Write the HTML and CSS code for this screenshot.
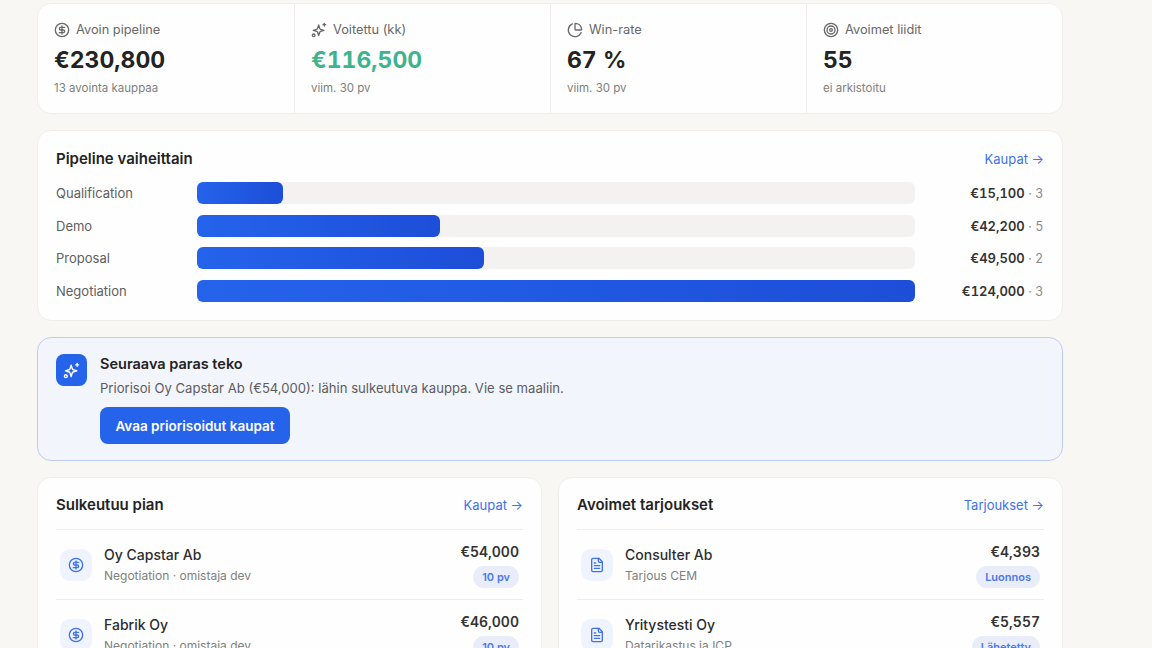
FILE: index.html
```html
<!DOCTYPE html>
<html lang="fi">
<head>
    <meta charset="UTF-8">
    <meta name="viewport" content="width=device-width, initial-scale=1.0">
    <title>Yhteenveto</title>
    <link rel="stylesheet" href="styles.css">
</head>
<body>
    <svg class="icon-defs" aria-hidden="true">
        <symbol id="i-dollar" viewBox="0 0 24 24"><circle cx="12" cy="12" r="10"/><path d="M16 8h-6a2 2 0 1 0 0 4h4a2 2 0 1 1 0 4H8"/><path d="M12 18V6"/></symbol>
        <symbol id="i-sparkles" viewBox="0 0 24 24"><path d="M11.5 20.5 9.9 15.4a2 2 0 0 0-1.3-1.3L3.5 12.500l5.100-1.600a2 2 0 0 0 1.300-1.300l1.600-5.100 1.600 5.100a2 2 0 0 0 1.300 1.300l5.100 1.600-5.100 1.600a2 2 0 0 0-1.300 1.300z"/><path d="M20 2v4"/><path d="M22 4h-4"/><circle cx="4" cy="20" r="2"/></symbol>
        <symbol id="i-pie" viewBox="0 0 24 24"><path d="M21 12c.552 0 1.005-.449.95-.998a10 10 0 0 0-8.953-8.951c-.55-.055-.998.398-.998.95v8a1 1 0 0 0 1 1z"/><path d="M21.21 15.89A10 10 0 1 1 8 2.83"/></symbol>
        <symbol id="i-target" viewBox="0 0 24 24"><circle cx="12" cy="12" r="10"/><circle cx="12" cy="12" r="6"/><circle cx="12" cy="12" r="2"/></symbol>
        <symbol id="i-file" viewBox="0 0 24 24"><path d="M15 2H6a2 2 0 0 0-2 2v16a2 2 0 0 0 2 2h12a2 2 0 0 0 2-2V7z"/><path d="M14 2v4a2 2 0 0 0 2 2h4"/><path d="M10 9H8"/><path d="M16 13H8"/><path d="M16 17H8"/></symbol>
    </svg>

    <div class="page">
        <section class="card stats">
            <div class="stat">
                <div class="stat-label"><svg class="icon"><use href="#i-dollar"/></svg>Avoin pipeline</div>
                <div class="stat-value">€230,800</div>
                <div class="stat-sub">13 avointa kauppaa</div>
            </div>
            <div class="stat">
                <div class="stat-label"><svg class="icon"><use href="#i-sparkles"/></svg>Voitettu (kk)</div>
                <div class="stat-value green">€116,500</div>
                <div class="stat-sub">viim. 30 pv</div>
            </div>
            <div class="stat">
                <div class="stat-label"><svg class="icon"><use href="#i-pie"/></svg>Win-rate</div>
                <div class="stat-value">67 %</div>
                <div class="stat-sub">viim. 30 pv</div>
            </div>
            <div class="stat">
                <div class="stat-label"><svg class="icon"><use href="#i-target"/></svg>Avoimet liidit</div>
                <div class="stat-value">55</div>
                <div class="stat-sub">ei arkistoitu</div>
            </div>
        </section>

        <section class="card pipeline">
            <div class="card-head">
                <h2>Pipeline vaiheittain</h2>
                <a class="more" href="#">Kaupat →</a>
            </div>
            <div class="stage">
                <span class="stage-name">Qualification</span>
                <div class="track"><div class="fill" style="width: 12%"></div></div>
                <span class="stage-sum"><b>€15,100</b> · 3</span>
            </div>
            <div class="stage">
                <span class="stage-name">Demo</span>
                <div class="track"><div class="fill" style="width: 33.900%"></div></div>
                <span class="stage-sum"><b>€42,200</b> · 5</span>
            </div>
            <div class="stage">
                <span class="stage-name">Proposal</span>
                <div class="track"><div class="fill" style="width: 40%"></div></div>
                <span class="stage-sum"><b>€49,500</b> · 2</span>
            </div>
            <div class="stage">
                <span class="stage-name">Negotiation</span>
                <div class="track"><div class="fill" style="width: 100%"></div></div>
                <span class="stage-sum"><b>€124,000</b> · 3</span>
            </div>
        </section>

        <section class="card next">
            <div class="next-icon"><svg class="icon"><use href="#i-sparkles"/></svg></div>
            <div class="next-body">
                <h3>Seuraava paras teko</h3>
                <p>Priorisoi Oy Capstar Ab (€54,000): lähin sulkeutuva kauppa. Vie se maaliin.</p>
                <button>Avaa priorisoidut kaupat</button>
            </div>
        </section>

        <div class="columns">
            <section class="card list">
                <div class="card-head list-head">
                    <h2>Sulkeutuu pian</h2>
                    <a class="more" href="#">Kaupat →</a>
                </div>
                <div class="row">
                    <div class="row-icon"><svg class="icon"><use href="#i-dollar"/></svg></div>
                    <div class="row-main">
                        <div class="row-name">Oy Capstar Ab</div>
                        <div class="row-sub">Negotiation · omistaja dev</div>
                    </div>
                    <div class="row-side">
                        <div class="row-amount">€54,000</div>
                        <span class="badge">10 pv</span>
                    </div>
                </div>
                <div class="row">
                    <div class="row-icon"><svg class="icon"><use href="#i-dollar"/></svg></div>
                    <div class="row-main">
                        <div class="row-name">Fabrik Oy</div>
                        <div class="row-sub">Negotiation · omistaja dev</div>
                    </div>
                    <div class="row-side">
                        <div class="row-amount">€46,000</div>
                        <span class="badge">10 pv</span>
                    </div>
                </div>
            </section>

            <section class="card list">
                <div class="card-head list-head">
                    <h2>Avoimet tarjoukset</h2>
                    <a class="more" href="#">Tarjoukset →</a>
                </div>
                <div class="row">
                    <div class="row-icon"><svg class="icon"><use href="#i-file"/></svg></div>
                    <div class="row-main">
                        <div class="row-name">Consulter Ab</div>
                        <div class="row-sub">Tarjous CEM</div>
                    </div>
                    <div class="row-side">
                        <div class="row-amount">€4,393</div>
                        <span class="badge">Luonnos</span>
                    </div>
                </div>
                <div class="row">
                    <div class="row-icon"><svg class="icon"><use href="#i-file"/></svg></div>
                    <div class="row-main">
                        <div class="row-name">Yritystesti Oy</div>
                        <div class="row-sub">Datarikastus ja ICP</div>
                    </div>
                    <div class="row-side">
                        <div class="row-amount">€5,557</div>
                        <span class="badge">Lähetetty</span>
                    </div>
                </div>
            </section>
        </div>
    </div>
</body>
</html>
```
FILE: styles.css
```css
html, body {
    margin: 0;
    height: 648px;
    overflow: hidden;
}
body {
    font-family: Inter, "Liberation Sans", sans-serif;
    background-color: #f8f7f4;
    color: #232323;
}
h2, h3, p {
    margin: 0;
}
.icon-defs {
    display: none;
}
.icon {
    width: 16px;
    height: 16px;
    fill: none;
    stroke: currentColor;
    stroke-width: 2;
    stroke-linecap: round;
    stroke-linejoin: round;
    flex: none;
}
.page {
    display: flex;
    flex-direction: column;
    gap: 16px;
    width: 1026px;
    margin-left: 37px;
    padding-top: 3px;
}
.card {
    background: #fefefe;
    border: 1px solid #efeeeb;
    border-radius: 14px;
    box-sizing: border-box;
}

/* stats */
.stats {
    display: grid;
    grid-template-columns: repeat(4, 1fr);
    height: 111px;
}
.stat {
    padding: 17px 16px 0;
    border-left: 1px solid #efeeeb;
}
.stat:first-child {
    border-left: none;
}
.stat-label {
    display: flex;
    align-items: center;
    gap: 6px;
    font-size: 12.800px;
    line-height: 18px;
    color: #686868;
}
.stat-value {
    margin-top: 4px;
    font-size: 23px;
    font-weight: 700;
    line-height: 34px;
    font-variant-numeric: tabular-nums;
}
.stat-value.green {
    color: #3eb48c;
}
.stat-sub {
    margin-top: 3px;
    font-size: 11.500px;
    line-height: 16px;
    color: #808080;
}

/* pipeline */
.pipeline {
    height: 191px;
    padding: 17px 18px 0;
}
.pipeline .more {
    padding-top: 2px;
}
.card-head {
    display: flex;
    justify-content: space-between;
    align-items: center;
    height: 20px;
    margin-bottom: 14px;
}
.card-head h2 {
    font-size: 15px;
    font-weight: 600;
}
.more {
    font-size: 13px;
    color: #3f71ec;
    text-decoration: none;
}
.stage {
    display: flex;
    align-items: center;
    height: 22px;
    margin-bottom: 10.700px;
    font-size: 13px;
}
.stage-name {
    width: 141px;
    color: #5f5f5f;
}
.track {
    width: 718px;
    height: 22px;
    border-radius: 6px;
    background: #f3f2f0;
}
.fill {
    height: 100%;
    border-radius: 6px;
    background: linear-gradient(90deg, #2563eb, #1d4ed8);
}
.stage-sum {
    flex: 1;
    padding-right: 1px;
    text-align: right;
    font-size: 12.500px;
    color: #8a8a8a;
}
.stage-sum b {
    font-size: 13px;
    font-weight: 600;
    color: #333333;
    font-variant-numeric: tabular-nums;
}

/* next step */
.next {
    display: flex;
    gap: 13px;
    height: 124px;
    padding: 16px 18px 0;
    background: #f3f5fc;
    border-color: #bccdf3;
}
.next-icon {
    display: flex;
    align-items: center;
    justify-content: center;
    width: 31px;
    height: 32px;
    border-radius: 8px;
    background: #2563eb;
    color: #ffffff;
}
.next-icon .icon {
    width: 17px;
    height: 17px;
}
.next-body h3 {
    font-size: 14.500px;
    font-weight: 600;
    line-height: 20px;
}
.next-body p {
    margin-top: 4px;
    font-size: 13.100px;
    line-height: 20px;
    color: #5c5c5c;
}
.next-body button {
    margin-top: 9px;
    width: 190px;
    height: 37px;
    border: none;
    border-radius: 8px;
    background: #2563eb;
    color: #ffffff;
    font-family: inherit;
    font-size: 13.500px;
    font-weight: 600;
}

/* lists */
.columns {
    display: grid;
    grid-template-columns: 505px 505px;
    gap: 16px;
}
.list {
    padding: 16px 18px 0;
    height: 240px;
}
.list-head {
    height: 21px;
    margin: 0;
    padding-bottom: 14px;
    border-bottom: 1px solid #eeedea;
}
.row {
    display: flex;
    align-items: center;
    height: 69px;
    padding: 0 4px;
    border-bottom: 1px solid #eeedea;
}
.row-icon {
    display: flex;
    align-items: center;
    justify-content: center;
    width: 32px;
    height: 32px;
    margin-right: 12px;
    border-radius: 10px;
    background: #eff3fe;
    color: #3f71ec;
}
.row-main {
    flex: 1;
}
.row-name {
    font-size: 14px;
    font-weight: 500;
    line-height: 20px;
    color: #2d2d2d;
}
.row-sub {
    margin-top: 2px;
    font-size: 12px;
    line-height: 18px;
    color: #808080;
}
.row-side {
    display: flex;
    flex-direction: column;
    align-items: flex-end;
    gap: 4px;
}
.row-amount {
    font-size: 14px;
    font-weight: 600;
    line-height: 20px;
    color: #333333;
    font-variant-numeric: tabular-nums;
}
.badge {
    padding: 0 9px;
    border-radius: 11px;
    background: #e9edf9;
    color: #4c79ea;
    font-size: 11px;
    font-weight: 600;
    line-height: 22px;
}
```
